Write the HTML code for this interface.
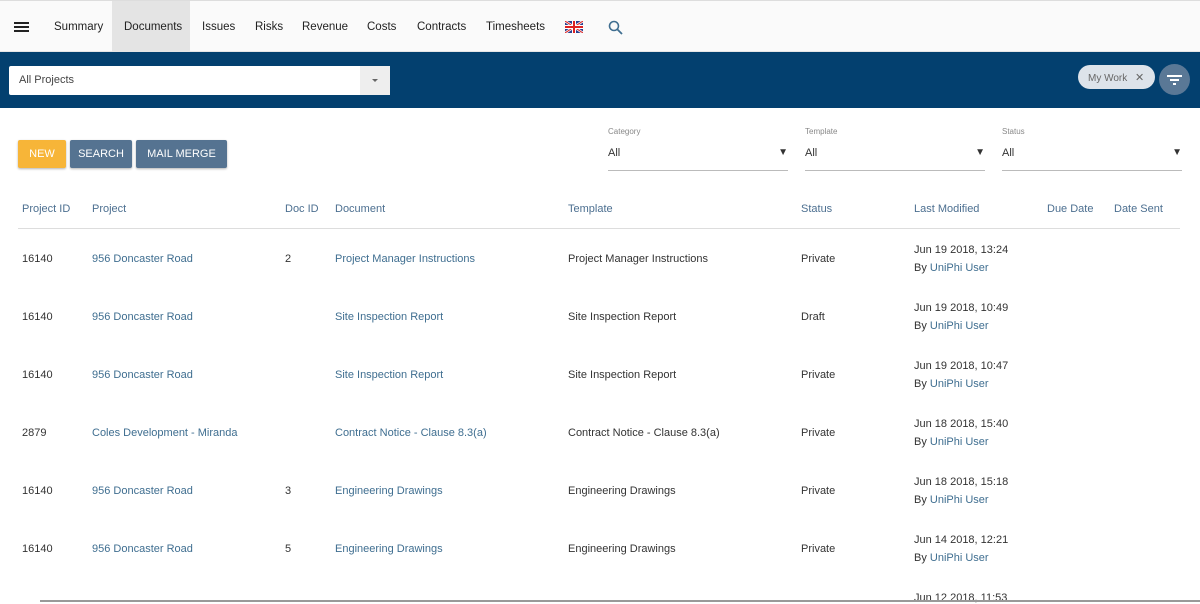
<!DOCTYPE html>
<html><head><style>
*{margin:0;padding:0;box-sizing:border-box}
body{width:1200px;height:602px;overflow:hidden;background:#fff;font-family:"Liberation Sans",sans-serif;font-size:11px;color:#333;position:relative}
.nav{position:absolute;top:0;left:0;width:1200px;height:52px;background:#fafafa;border-top:1px solid #ddd;border-bottom:1px solid #e6e6e6}
.nav span{position:absolute;top:20px;font-size:11.5px;color:#222}
.tab{position:absolute;left:112px;top:0;width:78px;height:52px;background:#e4e4e4}
.band{position:absolute;top:52px;left:0;width:1200px;height:56px;background:#03406f}
.sel{position:absolute;left:9px;top:66px;width:381px;height:29px;background:#fff;border-radius:2px}
.sel span{position:absolute;left:10px;top:8px;color:#444}
.sel .dd{position:absolute;right:0;top:0;width:30px;height:29px;background:#eee}
.chip{position:absolute;left:1078px;top:65px;width:77px;height:24px;border-radius:12px;background:#dde3ea;color:#666;font-size:10px;padding:6px 10px;white-space:nowrap}
.fab{position:absolute;left:1159px;top:64px;width:31px;height:31px;border-radius:50%;background:#5a7896}
.btn{position:absolute;top:140px;height:28px;color:#fff;font-size:11px;text-align:center;line-height:28px;border-radius:2px;box-shadow:0 1px 2px rgba(0,0,0,.3)}
.f{position:absolute;top:126px;width:180px;height:45px;border-bottom:1px solid #bbb}
.f .l{font-size:8px;color:#888;position:absolute;top:1px}
.f .v{position:absolute;top:21px;font-size:11px;color:#333}
.f .a{position:absolute;right:0;top:21px;font-size:10px}
.h{position:absolute;top:203px;color:#4c6f90;font-size:11px}
.line{position:absolute;left:18px;top:228px;width:1162px;height:1px;background:#ddd}
.c{position:absolute;font-size:11px;color:#333;margin-top:1px}
.k{color:#3f6e90}
</style></head><body>
<div class="nav">
<div class="tab"></div>
<div style="position:absolute;left:14px;top:21px;width:15px;height:2px;background:#222;box-shadow:0 4px 0 #222,0 8px 0 #222"></div>
<span style="left:54px">Summary</span><span style="left:124px">Documents</span><span style="left:202px">Issues</span><span style="left:255px">Risks</span><span style="left:302px">Revenue</span><span style="left:367px">Costs</span><span style="left:417px">Contracts</span><span style="left:486px">Timesheets</span>
<svg style="position:absolute;left:565px;top:20px" width="18" height="12" viewBox="0 0 18 12"><rect width="18" height="12" fill="#2a3f8f"/><path d="M0 0L18 12M18 0L0 12" stroke="#fff" stroke-width="2.5"/><path d="M0 0L18 12M18 0L0 12" stroke="#d22" stroke-width="1"/><path d="M9 0V12M0 6H18" stroke="#fff" stroke-width="4"/><path d="M9 0V12M0 6H18" stroke="#d22" stroke-width="2"/></svg>
<svg style="position:absolute;left:608px;top:19px" width="15" height="15" viewBox="0 0 15 15"><circle cx="6" cy="6" r="4.5" fill="none" stroke="#3f6e90" stroke-width="1.6"/><path d="M9.5 9.5L14 14" stroke="#3f6e90" stroke-width="1.8"/></svg>
</div>
<div class="band"></div>
<div class="sel"><span>All Projects</span><div class="dd"><div style="position:absolute;left:12px;top:13px;border:3px solid transparent;border-top:3px solid #666"></div></div></div>
<div class="chip">My Work <span style="margin-left:5px;font-size:11px">✕</span></div>
<div class="fab"><div style="position:absolute;left:8px;top:11px;width:15px;height:1.5px;background:#fff"></div><div style="position:absolute;left:11px;top:15px;width:9px;height:1.5px;background:#fff"></div><div style="position:absolute;left:14px;top:19px;width:3px;height:1.5px;background:#fff"></div></div>
<div class="btn" style="left:18px;width:48px;background:#f7b538">NEW</div>
<div class="btn" style="left:70px;width:62px;background:#557391">SEARCH</div>
<div class="btn" style="left:136px;width:91px;background:#557391">MAIL MERGE</div>
<div class="f" style="left:608px"><div class="l">Category</div><div class="v">All</div><div class="a">▼</div></div>
<div class="f" style="left:805px"><div class="l">Template</div><div class="v">All</div><div class="a">▼</div></div>
<div class="f" style="left:1002px"><div class="l">Status</div><div class="v">All</div><div class="a">▼</div></div>
<div class="h" style="left:22px">Project ID</div><div class="h" style="left:92px">Project</div><div class="h" style="left:285px">Doc ID</div><div class="h" style="left:335px">Document</div><div class="h" style="left:568px">Template</div><div class="h" style="left:801px">Status</div><div class="h" style="left:914px">Last Modified</div><div class="h" style="left:1047px">Due Date</div><div class="h" style="left:1114px">Date Sent</div>
<div class="line"></div>
<div class="c" style="left:22px;top:252px">16140</div><div class="c k" style="left:92px;top:252px">956 Doncaster Road</div><div class="c" style="left:285px;top:252px">2</div><div class="c k" style="left:335px;top:252px">Project Manager Instructions</div><div class="c" style="left:568px;top:252px">Project Manager Instructions</div><div class="c" style="left:801px;top:252px">Private</div><div class="c" style="left:914px;top:243px">Jun 19 2018, 13:24</div><div class="c" style="left:914px;top:261px">By <span class="k">UniPhi User</span></div>
<div class="c" style="left:22px;top:310px">16140</div><div class="c k" style="left:92px;top:310px">956 Doncaster Road</div><div class="c k" style="left:335px;top:310px">Site Inspection Report</div><div class="c" style="left:568px;top:310px">Site Inspection Report</div><div class="c" style="left:801px;top:310px">Draft</div><div class="c" style="left:914px;top:301px">Jun 19 2018, 10:49</div><div class="c" style="left:914px;top:319px">By <span class="k">UniPhi User</span></div>
<div class="c" style="left:22px;top:368px">16140</div><div class="c k" style="left:92px;top:368px">956 Doncaster Road</div><div class="c k" style="left:335px;top:368px">Site Inspection Report</div><div class="c" style="left:568px;top:368px">Site Inspection Report</div><div class="c" style="left:801px;top:368px">Private</div><div class="c" style="left:914px;top:359px">Jun 19 2018, 10:47</div><div class="c" style="left:914px;top:377px">By <span class="k">UniPhi User</span></div>
<div class="c" style="left:22px;top:426px">2879</div><div class="c k" style="left:92px;top:426px">Coles Development - Miranda</div><div class="c k" style="left:335px;top:426px">Contract Notice - Clause 8.3(a)</div><div class="c" style="left:568px;top:426px">Contract Notice - Clause 8.3(a)</div><div class="c" style="left:801px;top:426px">Private</div><div class="c" style="left:914px;top:417px">Jun 18 2018, 15:40</div><div class="c" style="left:914px;top:435px">By <span class="k">UniPhi User</span></div>
<div class="c" style="left:22px;top:484px">16140</div><div class="c k" style="left:92px;top:484px">956 Doncaster Road</div><div class="c" style="left:285px;top:484px">3</div><div class="c k" style="left:335px;top:484px">Engineering Drawings</div><div class="c" style="left:568px;top:484px">Engineering Drawings</div><div class="c" style="left:801px;top:484px">Private</div><div class="c" style="left:914px;top:475px">Jun 18 2018, 15:18</div><div class="c" style="left:914px;top:493px">By <span class="k">UniPhi User</span></div>
<div class="c" style="left:22px;top:542px">16140</div><div class="c k" style="left:92px;top:542px">956 Doncaster Road</div><div class="c" style="left:285px;top:542px">5</div><div class="c k" style="left:335px;top:542px">Engineering Drawings</div><div class="c" style="left:568px;top:542px">Engineering Drawings</div><div class="c" style="left:801px;top:542px">Private</div><div class="c" style="left:914px;top:533px">Jun 14 2018, 12:21</div><div class="c" style="left:914px;top:551px">By <span class="k">UniPhi User</span></div>
<div class="c" style="left:914px;top:591px">Jun 12 2018, 11:53</div>
<div style="position:absolute;left:40px;top:600px;width:1160px;height:2px;background:#999"></div>
</body></html>
